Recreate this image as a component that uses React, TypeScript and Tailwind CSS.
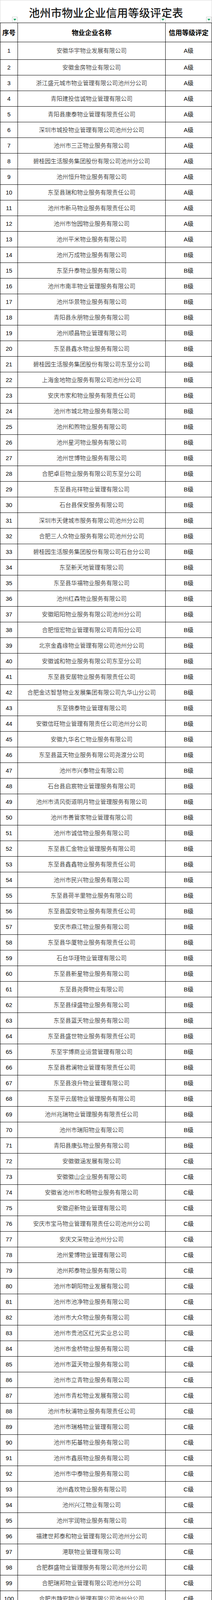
const rows: [string, string][] = [
  ["安徽华宇物业发展有限公司", "A级"],
  ["安徽金房物业有限公司", "A级"],
  ["浙江盛元城市物业管理有限公司池州分公司", "A级"],
  ["青阳建投信诚物业管理有限公司", "A级"],
  ["青阳县康泰物业管理有限责任公司", "A级"],
  ["深圳市城投物业管理有限公司池州分公司", "A级"],
  ["池州市三正物业服务有限公司", "A级"],
  ["碧桂园生活服务集团股份有限公司池州分公司", "A级"],
  ["池州恒升物业服务有限公司", "A级"],
  ["东至县瑞和物业服务有限责任公司", "A级"],
  ["池州市新马物业服务有限责任公司", "A级"],
  ["池州市怡园物业服务有限公司", "A级"],
  ["池州平米物业服务有限公司", "A级"],
  ["池州万成物业服务有限公司", "B级"],
  ["东至升泰物业服务有限公司", "B级"],
  ["池州市南丰物业管理服务有限公司", "B级"],
  ["池州华景物业服务有限公司", "B级"],
  ["青阳县永朋物业服务有限公司", "B级"],
  ["池州顺昌物业管理有限公司", "B级"],
  ["东至县鑫水物业服务有限公司", "B级"],
  ["碧桂园生活服务集团股份有限公司东至分公司", "B级"],
  ["上海金地物业服务有限公司池州分公司", "B级"],
  ["安庆市家和物业服务有限责任公司", "B级"],
  ["池州市城北物业服务有限公司", "B级"],
  ["池州和煦物业服务有限公司", "B级"],
  ["池州星河物业服务有限公司", "B级"],
  ["池州世博物业服务有限公司", "B级"],
  ["合肥卓巨物业服务有限公司东至分公司", "B级"],
  ["东至县兆祥物业管理有限公司", "B级"],
  ["石台县保安服务有限公司", "B级"],
  ["深圳市天健城市服务有限公司池州分公司", "B级"],
  ["合肥三人众物业服务有限公司池州分公司", "B级"],
  ["碧桂园生活服务集团股份有限公司石台分公司", "B级"],
  ["东至新天地管理有限公司", "B级"],
  ["东至县华福物业服务有限公司", "B级"],
  ["池州红森物业服务有限公司", "B级"],
  ["安徽昭阳物业服务有限公司池州分公司", "B级"],
  ["合肥恒宏物业管理有限公司青阳分公司", "B级"],
  ["北京金鑫缘物业管理有限公司池州分公司", "B级"],
  ["安徽诚和物业服务有限公司东至分公司", "B级"],
  ["东至县安居物业服务有限责任公司", "B级"],
  ["合肥金达智慧物业发展集团有限公司九华山分公司", "B级"],
  ["东至锦泰物业管理有限公司", "B级"],
  ["安徽信旺物业管理有限责任公司池州分公司", "B级"],
  ["安徽九华名仁物业服务有限公司", "B级"],
  ["东至县蓝天物业服务有限公司尧渡分公司", "B级"],
  ["池州市兴泰物业有限公司", "B级"],
  ["石台县启宸物业管理服务有限公司", "B级"],
  ["池州市清风街道明月物业管理服务有限公司", "B级"],
  ["池州市善管家物业管理有限公司", "B级"],
  ["池州市诚信物业服务有限公司", "B级"],
  ["东至县汇金物业管理服务有限公司", "B级"],
  ["东至县鑫鑫物业服务有限责任公司", "B级"],
  ["池州市民兴物业服务有限公司", "B级"],
  ["东至县荷半里物业服务有限公司", "B级"],
  ["东至县国安物业服务有限责任公司", "B级"],
  ["安庆市鼎江物业服务有限公司", "B级"],
  ["东至县华厦物业服务有限责任公司", "B级"],
  ["石台华瑾物业管理有限公司", "B级"],
  ["东至县新星物业服务有限公司", "B级"],
  ["东至县尧舜物业有限公司", "B级"],
  ["东至县绿盛物业服务有限公司", "B级"],
  ["东至县蓝天物业服务有限公司", "B级"],
  ["东至县盛世物业服务有限责任公司", "B级"],
  ["东至宇博商业运营管理有限公司", "B级"],
  ["东至县君澜物业管理有限责任公司", "B级"],
  ["东至县浪升物业管理有限公司", "B级"],
  ["东至平云居物业管理服务有限公司", "B级"],
  ["池州兆瑞物业管理服务有限责任公司", "B级"],
  ["池州市瑞阳物业有限公司", "B级"],
  ["青阳县康弘物业服务有限公司", "B级"],
  ["安徽徽涵发展有限公司", "C级"],
  ["安徽徽山企业服务有限公司", "C级"],
  ["安徽省池州市和畅物业服务有限公司", "C级"],
  ["安徽迎新物业管理有限公司", "C级"],
  ["安庆市宝马物业管理有限责任公司池州分公司", "C级"],
  ["安庆文采物业池州分公司", "C级"],
  ["池州爱博物业管理有限公司", "C级"],
  ["池州邦泰物业服务有限公司", "C级"],
  ["池州市朝阳物业发展有限公司", "C级"],
  ["池州市池净物业服务有限公司", "C级"],
  ["池州市大众物业服务有限公司", "C级"],
  ["池州市贵池区红光实业总公司", "C级"],
  ["池州市金桥物业服务有限公司", "C级"],
  ["池州市蓝天物业服务有限公司", "C级"],
  ["池州市立青物业服务有限公司", "C级"],
  ["池州市青松物业发展有限公司", "C级"],
  ["池州市秋浦物业服务有限责任公司", "C级"],
  ["池州市瑞格物业管理有限公司", "C级"],
  ["池州市拓基物业服务有限公司", "C级"],
  ["池州市鑫辰物业服务有限公司", "C级"],
  ["池州市中泰物业服务有限公司", "C级"],
  ["池州鑫玫物业服务有限公司", "C级"],
  ["池州兴江物业有限公司", "C级"],
  ["池州宇润物业服务有限公司", "C级"],
  ["福建世邦泰和物业管理有限公司池州分公司", "C级"],
  ["港联物业管理有限公司", "C级"],
  ["合肥群盛物业管理服务有限公司池州分公司", "C级"],
  ["合肥瑞邦物业管理有限公司池州分公司", "C级"],
  ["合肥市静安物业管理有限公司池州分公司", "C级"],
  ["马鞍山市四季保洁有限公司池州分公司", "C级"],
  ["南京宝石花物业服务池州有限公司", "C级"],
  ["南京博涵物业管理服务有限公司池州分公司", "C级"],
  ["石台县孺子牛物业服务有限公司池州分公司", "C级"],
  ["天堂湖物业管理服务有限公司", "C级"],
  ["王老五物业服务有限公司", "C级"],
  ["潍坊益翔市政服务有限公司池州分公司", "C级"],
  ["浙江绿升物业服务有限公司池州分公司", "C级"],
  ["池州市三正物业服务有限公司石台分公司", "C级"],
  ["石台县洁玲物业有限公司", "C级"],
  ["石台县双友物业有限公司", "C级"],
  ["东至县瑞和物业服务有限责任公司石台分公司", "C级"],
  ["石台县大洋物业有限公司", "C级"],
  ["池州市蓝玉物业管理服务有限公司", "C级"],
  ["石台全季物业有限公司", "C级"],
  ["遇诚家政服务公司", "C级"],
  ["池州沂鑫物业服务有限公司", "C级"],
  ["青阳阳光物业服务有限责任公司", "C级"],
  ["青阳县义鼎物业管理有限公司", "C级"],
  ["青阳县康平物业管理有限公司", "C级"],
  ["青阳亨泰物业服务公司", "C级"],
  ["青阳海博物业服务有限公司", "C级"],
  ["合肥顺昌物业管理有限公司青阳分公司", "C级"],
  ["合肥君诚物业管理有限责任公司青阳分公司", "C级"],
  ["池州启源物业有限服务公司", "C级"],
  ["池州绿都物业管理有限公司", "C级"],
  ["池州国威保全物业管理有限公司", "C级"],
  ["常州金坛鑫盛物业有限公司青阳分公司", "C级"],
  ["碧桂园生活服务集团股份有限公司青阳分公司", "C级"],
  ["上海荣域物业服务有限公司青阳分公司", "C级"],
  ["青阳县金恒物业管理有限公司", "C级"],
]

function FilterButton({ className }: { className: string }) {
  return (
    <span
      className={`absolute bottom-[1px] flex h-[14px] w-[14px] items-center justify-center border border-[#c9c9c9] bg-white ${className}`}
    >
      <svg width="8" height="5" viewBox="0 0 8 5">
        <path d="M0 0h8L4 5z" fill="#1fa463" />
      </svg>
    </span>
  )
}

function Row({ no, name, grade, height }: { no: number; name: string; grade: string; height: string }) {
  return (
    <div className={`flex ${height} overflow-hidden border-b border-l border-black text-[15px] leading-[18px]`}>
      <div className="flex w-[45px] shrink-0 items-center justify-center border-r border-black">{no}</div>
      <div className="flex w-[379px] shrink-0 items-center justify-center whitespace-nowrap border-r border-black font-light">
        {name}
      </div>
      <div className="flex w-[119px] shrink-0 items-center justify-center border-r border-black">{grade}</div>
    </div>
  )
}

export default function App() {
  return (
    <div className="w-[544px] bg-white text-black font-['Liberation_Sans','Noto_Sans_CJK_SC',sans-serif]">
      <div className="relative flex h-[58px] justify-center overflow-hidden border-x border-t border-[#d9d9d9] pt-[15px]">
        <h1 className="text-[28px] leading-[32px] font-medium tracking-[0.3px] text-[#1a1a1a] font-['Noto_Sans_CJK_SC',serif]">
          池州市物业企业信用等级评定表
        </h1>
        <FilterButton className="left-[30px]" />
        <FilterButton className="left-[410px]" />
        <FilterButton className="left-[528px]" />
      </div>

      <div className="flex h-[50px] overflow-hidden border-y border-l border-black text-[17px] leading-[20px] font-bold font-['Noto_Sans_CJK_SC',sans-serif]">
        <div className="flex w-[45px] shrink-0 items-center justify-center border-r border-black">序号</div>
        <div className="flex w-[379px] shrink-0 items-center justify-center border-r border-black">物业企业名称</div>
        <div className="flex w-[119px] shrink-0 items-center justify-center border-r border-black">信用等级评定</div>
      </div>

      {rows.map(([name, grade], i) => (
        <Row
          key={i}
          no={i + 1}
          name={name}
          grade={grade}
          height={i === 0 ? "h-[45px]" : i === 128 ? "h-[53px]" : "h-10"}
        />
      ))}
    </div>
  )
}
